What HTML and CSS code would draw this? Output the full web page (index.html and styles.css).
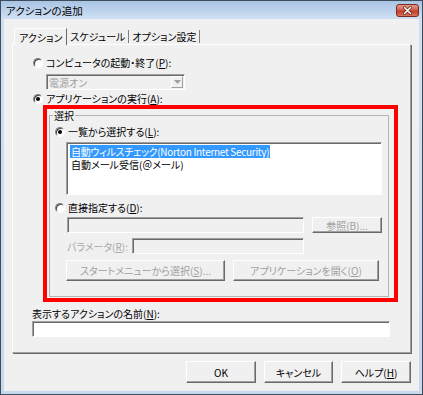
FILE: index.html
```html
<!DOCTYPE html>
<html lang="ja">
<head>
    <meta charset="UTF-8">
    <title>アクションの追加</title>
    <link rel="stylesheet" href="styles.css">
</head>
<body>
    <div class="window">
        <div class="titlebar">
            <span class="title">アクションの追加</span>
            <span class="close">
                <svg width="23" height="13" viewBox="0 0 23 13">
                    <defs>
                        <linearGradient id="cg" x1="0" y1="0" x2="0" y2="1">
                            <stop offset="0" stop-color="#e8a090"/>
                            <stop offset="0.45" stop-color="#d06050"/>
                            <stop offset="0.55" stop-color="#c03a28"/>
                            <stop offset="1" stop-color="#e07a60"/>
                        </linearGradient>
                    </defs>
                    <rect x="0.5" y="0.5" width="22" height="12" rx="2.5" fill="url(#cg)" stroke="#7a2a20"/>
                    <path d="M8.5 3.5 L14.5 9.5 M14.5 3.5 L8.5 9.5" stroke="#5a2018" stroke-width="3" stroke-linecap="round"/>
                    <path d="M8.5 3.5 L14.5 9.5 M14.5 3.5 L8.5 9.5" stroke="#ffffff" stroke-width="1.6" stroke-linecap="round"/>
                </svg>
            </span>
        </div>
        <div class="client">
            <div class="tabs">
                <div class="tab active">アクション</div>
                <div class="tab">スケジュール</div>
                <div class="tab">オプション設定</div>
            </div>
            <div class="panel">
                <div class="radio-row"><span class="radio"></span>コンピュータの起動・終了(<u>P</u>):</div>
                <div class="combo">
                    <span class="combo-text">電源オン</span>
                    <span class="combo-btn"><svg width="7" height="4" viewBox="0 0 7 4"><path d="M0 0 H7 L3.5 4 Z" fill="#a0a0a0"/></svg></span>
                </div>
                <div class="radio-row row-app"><span class="radio checked"></span>アプリケーションの実行(<u>A</u>):</div>

                <div class="highlight">
                    <fieldset class="group">
                        <legend>選択</legend>
                        <div class="radio-row row-list"><span class="radio checked"></span>一覧から選択する(<u>L</u>):</div>
                        <div class="listbox">
                            <div class="item"><span class="selected">自動ウィルスチェック(Norton Internet Security)</span></div>
                            <div class="item"><span>自動メール受信(＠メール)</span></div>
                        </div>
                        <div class="radio-row row-direct"><span class="radio"></span>直接指定する(<u>D</u>):</div>
                        <div class="field-row path-row">
                            <div class="edit disabled path-edit"></div>
                            <button class="btn browse" disabled>参照(<u>B</u>)...</button>
                        </div>
                        <div class="field-row param-row">
                            <span class="param-label">パラメータ(<u>R</u>):</span>
                            <div class="edit disabled param-edit"></div>
                        </div>
                        <div class="field-row action-row">
                            <button class="btn start-menu" disabled>スタートメニューから選択(<u>S</u>)...</button>
                            <button class="btn open-app" disabled>アプリケーションを開く(<u>O</u>)</button>
                        </div>
                    </fieldset>
                </div>

                <div class="name-label">表示するアクションの名前(<u>N</u>):</div>
                <div class="edit name-edit"></div>
            </div>
            <div class="footer">
                <button class="btn dlg ok">OK</button>
                <button class="btn dlg cancel">キャンセル</button>
                <button class="btn dlg">ヘルプ(<u>H</u>)</button>
            </div>
        </div>
    </div>
</body>
</html>
```

FILE: styles.css
```css
body {
    margin: 0;
    background-color: #c4d8ee;
    font-family: "Noto Sans CJK JP", "Liberation Sans", sans-serif;
    font-size: 10px;
    line-height: 13px;
    font-feature-settings: "palt";
    color: #000000;
    white-space: nowrap;
}
u {
    text-decoration: underline;
    text-underline-offset: 1px;
}
.window {
    width: 423px;
    height: 395px;
    box-sizing: border-box;
    border: 1px solid #3e4c5c;
    background: linear-gradient(#a8c4e4, #cfe0f3 18px, #c5d9ef);
    padding: 0 3px 3px 3px;
    display: flex;
    flex-direction: column;
}
.titlebar {
    height: 18px;
    display: flex;
    align-items: center;
    justify-content: space-between;
}
.title {
    padding-left: 2px;
    font-size: 10.5px;
}
.close {
    display: flex;
    margin-top: 1px;
}
.client {
    flex: 1;
    background-color: #f0f0f0;
    padding: 9px 8px 8px 8px;
    display: flex;
    flex-direction: column;
}

/* tabs */
.tabs {
    display: flex;
    height: 16px;
    padding-left: 2px;
}
.tab {
    margin-top: 2px;
    padding: 0 3px;
    height: 13px;
    border-right: 1px solid #808080;
}
.tab.active {
    margin-top: 0;
    padding: 2px 4px 0 4px;
    box-sizing: border-box;
    height: 17px;
    border-top: 1px solid #ffffff;
    border-left: 1px solid #ffffff;
    border-right: 1px solid #696969;
    background-color: #f0f0f0;
    position: relative;
    z-index: 1;
}
.panel {
    flex: 1;
    border: 1px solid;
    border-color: #ffffff #a0a0a0 #a0a0a0 #ffffff;
    box-shadow: 1px 1px 0 #696969;
    padding: 11px 12px 0 20px;
}

/* radios */
.radio-row {
    display: flex;
    align-items: center;
    height: 13px;
}
.radio {
    width: 10px;
    height: 10px;
    box-sizing: border-box;
    border-radius: 50%;
    border: 1px solid;
    border-color: #808080 #ffffff #ffffff #808080;
    box-shadow: inset 1px 1px 0 #404040;
    background-color: #ffffff;
    margin-right: 3px;
    position: relative;
}
.radio.checked::after {
    content: "";
    position: absolute;
    left: 2px;
    top: 2px;
    width: 4px;
    height: 4px;
    border-radius: 50%;
    background-color: #000000;
}
.row-app {
    margin-top: 2px;
}

/* combo */
.combo {
    margin: 5px 0 0 13px;
    width: 139px;
    height: 16px;
    box-sizing: border-box;
    display: flex;
    align-items: center;
    justify-content: space-between;
    border: 1px solid;
    border-color: #a0a0a0 #ffffff #ffffff #a0a0a0;
    box-shadow: inset 1px 1px 0 #696969;
    background-color: #f0f0f0;
}
.combo-text {
    color: #a0a0a0;
    padding-left: 2px;
}
.combo-btn {
    width: 12px;
    height: 12px;
    box-sizing: border-box;
    margin-right: 1px;
    display: flex;
    align-items: center;
    justify-content: center;
    border: 1px solid;
    border-color: #ffffff #a0a0a0 #a0a0a0 #ffffff;
}

/* red frame */
.highlight {
    margin-left: 10px;
    border: 4px solid #ff0000;
    padding: 0 5px 1px 2px;
}
.group {
    margin: 0;
    padding: 0 0 15px 5px;
    border: 1px solid #b4b4b4;
}
.group legend {
    padding: 0 1px;
    margin-left: -2px;
}
.row-list {
    margin-top: 3px;
}
.listbox {
    margin: 4px 6px 0 11px;
    height: 53px;
    box-sizing: border-box;
    border: 1px solid;
    border-color: #a0a0a0 #ffffff #ffffff #a0a0a0;
    box-shadow: inset 1px 1px 0 #696969;
    background-color: #ffffff;
    padding: 2px 0 0 3px;
}
.item {
    height: 13px;
    overflow: hidden;
}
.item span {
    display: inline-block;
    vertical-align: top;
    height: 13px;
    line-height: 13px;
    padding: 0 1px;
}
.item .selected {
    background-color: #3399ff;
    color: #ffffff;
    letter-spacing: -0.3px;
}
.row-direct {
    margin-top: 6px;
}

/* edits and buttons */
.field-row {
    display: flex;
    align-items: center;
}
.path-row {
    margin: 3px 0 0 12px;
}
.param-row {
    margin: 5px 0 0 12px;
}
.action-row {
    margin: 6px 0 0 11px;
    gap: 8px;
}
.edit {
    height: 16px;
    box-sizing: border-box;
    border: 1px solid;
    border-color: #a0a0a0 #ffffff #ffffff #a0a0a0;
    box-shadow: inset 1px 1px 0 #696969;
    background-color: #ffffff;
}
.edit.disabled {
    background-color: #f0f0f0;
}
.path-edit {
    width: 237px;
}
.param-label {
    color: #a8a8a8;
    width: 65px;
}
.param-edit {
    width: 172px;
}
.btn {
    font-family: "Noto Sans CJK JP", "Liberation Sans", sans-serif;
    font-size: 10px;
    line-height: 13px;
    font-feature-settings: "palt";
    white-space: nowrap;
    color: #000000;
    background-color: #f0f0f0;
    border: 1px solid;
    border-color: #ffffff #696969 #696969 #ffffff;
    box-shadow: inset -1px -1px 0 #a0a0a0;
    padding: 0;
    margin: 0;
}
.btn:disabled {
    color: #a0a0a0;
}
.browse {
    width: 70px;
    height: 16px;
    margin-left: 8px;
}
.start-menu {
    width: 159px;
    height: 21px;
}
.open-app {
    width: 146px;
    height: 21px;
}
.name-label {
    margin: 5px 0 0 -1px;
}
.name-edit {
    margin: 1px 8px 0 -1px;
}

/* footer */
.footer {
    display: flex;
    justify-content: flex-end;
    gap: 8px;
    margin-top: 8px;
}
.dlg {
    width: 70px;
    height: 22px;
}
.dlg.cancel {
    width: 69px;
}
```
